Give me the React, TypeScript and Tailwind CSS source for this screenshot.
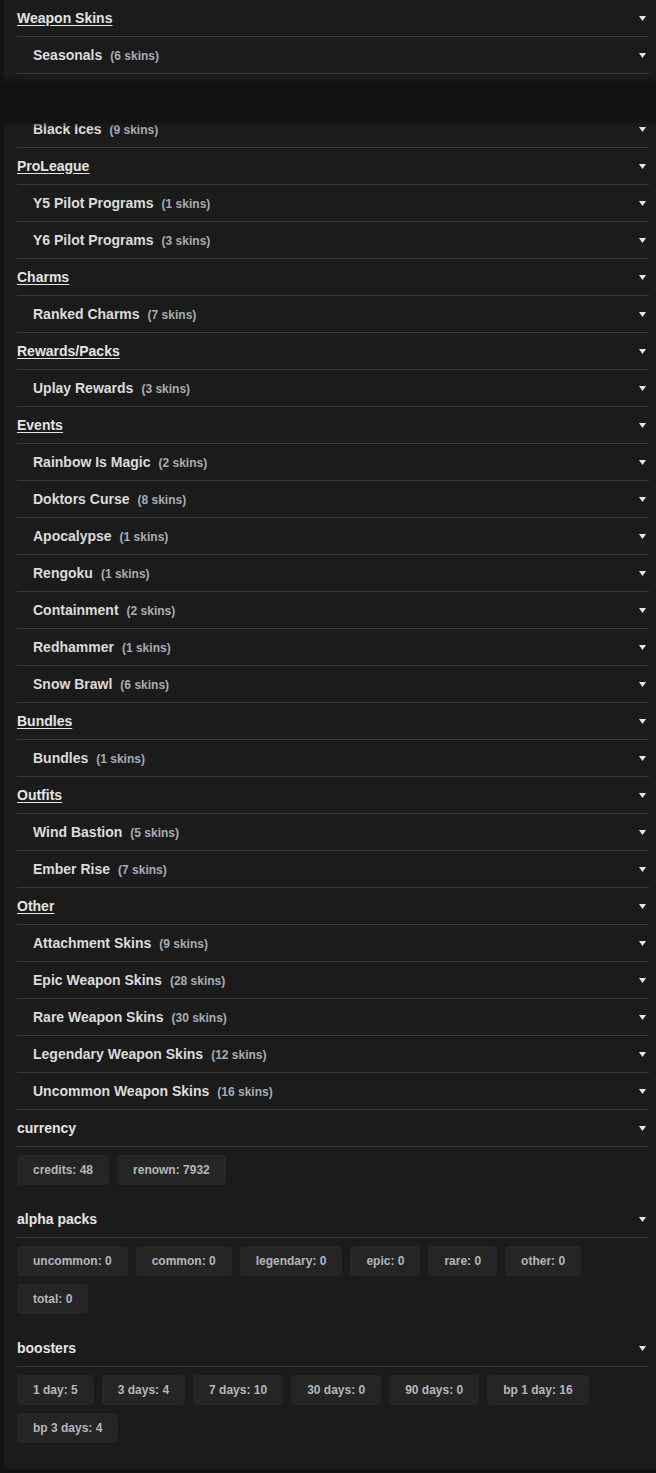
import React from 'react';

type Item = { name: string; count?: number };
type Group = { title: string; items: Item[] };

const groups: Group[] = [
  {
    title: 'Weapon Skins',
    items: [{ name: 'Seasonals', count: 6 }, { name: '' }, { name: 'Black Ices', count: 9 }],
  },
  {
    title: 'ProLeague',
    items: [
      { name: 'Y5 Pilot Programs', count: 1 },
      { name: 'Y6 Pilot Programs', count: 3 },
    ],
  },
  { title: 'Charms', items: [{ name: 'Ranked Charms', count: 7 }] },
  { title: 'Rewards/Packs', items: [{ name: 'Uplay Rewards', count: 3 }] },
  {
    title: 'Events',
    items: [
      { name: 'Rainbow Is Magic', count: 2 },
      { name: 'Doktors Curse', count: 8 },
      { name: 'Apocalypse', count: 1 },
      { name: 'Rengoku', count: 1 },
      { name: 'Containment', count: 2 },
      { name: 'Redhammer', count: 1 },
      { name: 'Snow Brawl', count: 6 },
    ],
  },
  { title: 'Bundles', items: [{ name: 'Bundles', count: 1 }] },
  {
    title: 'Outfits',
    items: [
      { name: 'Wind Bastion', count: 5 },
      { name: 'Ember Rise', count: 7 },
    ],
  },
  {
    title: 'Other',
    items: [
      { name: 'Attachment Skins', count: 9 },
      { name: 'Epic Weapon Skins', count: 28 },
      { name: 'Rare Weapon Skins', count: 30 },
      { name: 'Legendary Weapon Skins', count: 12 },
      { name: 'Uncommon Weapon Skins', count: 16 },
    ],
  },
];

const stats: { title: string; chips: string[] }[] = [
  { title: 'currency', chips: ['credits: 48', 'renown: 7932'] },
  {
    title: 'alpha packs',
    chips: ['uncommon: 0', 'common: 0', 'legendary: 0', 'epic: 0', 'rare: 0', 'other: 0', 'total: 0'],
  },
  {
    title: 'boosters',
    chips: ['1 day: 5', '3 days: 4', '7 days: 10', '30 days: 0', '90 days: 0', 'bp 1 day: 16', 'bp 3 days: 4'],
  },
];

const Caret = () => (
  <svg width="7" height="5" viewBox="0 0 7 5" className="shrink-0" aria-hidden="true">
    <polygon points="0,0 7,0 3.5,5" fill="#e8e8e8" />
  </svg>
);

const Row = ({ children, indent = false }: { children: React.ReactNode; indent?: boolean }) => (
  <div className="flex h-[37px] items-center justify-between border-b border-[#383838] pr-[3px]">
    <div className={indent ? 'flex items-baseline pl-4' : 'flex items-baseline'}>{children}</div>
    <Caret />
  </div>
);

export default function App() {
  return (
    <div className="relative min-h-[1473px] bg-[#131313] pl-[4px] font-['Liberation_Sans',Arial,sans-serif] font-bold">
      <div className="rounded-bl-[6px] bg-[#1b1b1b] pb-[10px] pl-[13px] pr-[7px]">
        {groups.map((g) => (
          <div key={g.title}>
            <Row>
              <span className="text-[14px] text-[#e4e4e4] underline underline-offset-2">{g.title}</span>
            </Row>
            {g.items.map((it, i) => (
              <Row key={i} indent>
                <span className="text-[14px] text-[#dcdcdc]">{it.name}</span>
                {it.count !== undefined && (
                  <span className="ml-2 text-[12px] text-[#a7adb3]">({it.count} skins)</span>
                )}
              </Row>
            ))}
          </div>
        ))}

        {stats.map((s) => (
          <div key={s.title}>
            <Row>
              <span className="text-[14px] text-[#e4e4e4]">{s.title}</span>
            </Row>
            <div className="flex flex-wrap gap-2 pb-4 pt-2">
              {s.chips.map((c) => (
                <div
                  key={c}
                  className="flex h-[30px] items-center rounded-[4px] bg-[#252525] px-4 text-[12px] text-[#b3b7bc]"
                >
                  {c}
                </div>
              ))}
            </div>
          </div>
        ))}
      </div>

      {/* dark band sitting over the list */}
      <div className="pointer-events-none absolute left-0 right-0 top-[76px] h-[52px] bg-[linear-gradient(to_bottom,rgba(17,17,17,0),#111_16%,#111_84%,rgba(17,17,17,0))]" />
    </div>
  );
}
